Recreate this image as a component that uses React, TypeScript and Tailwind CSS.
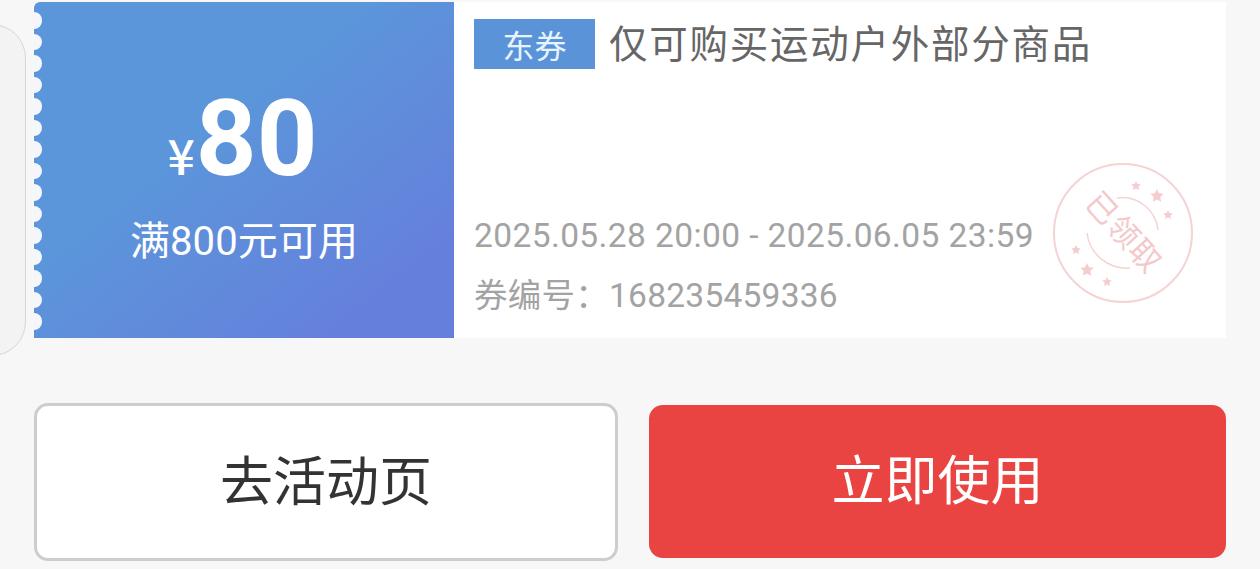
import React from 'react'

const cjk = { fontFamily: '"Noto Sans CJK SC", sans-serif' }
const mixed = { fontFamily: 'Roboto, "Noto Sans CJK SC", sans-serif' }
const bumps = Array.from({ length: 15 }, (_, i) => i)

function Star({ x, y, r }: { x: number; y: number; r: number }) {
  const pts = Array.from({ length: 10 }, (_, i) => {
    const a = (Math.PI / 5) * i - Math.PI / 2
    const d = i % 2 === 0 ? r : r * 0.5
    return `${x + d * Math.cos(a)},${y + d * Math.sin(a)}`
  }).join(' ')
  return <polygon points={pts} fill="#f5cdd0" />
}

function Stamp() {
  return (
    <svg width="144" height="144" viewBox="0 0 144 144" className="absolute left-[1017px] top-[160px]">
      <circle cx="72" cy="71" r="69" fill="none" stroke="#f5d3d3" strokeWidth="2" />
      <path d="M66 36 A36 36 0 0 1 107 68" fill="none" stroke="#f5d3d3" strokeWidth="1.5" />
      <path d="M36 71 A40 40 0 0 0 79 106" fill="none" stroke="#f5d3d3" strokeWidth="1.5" />
      <Star x={85} y={24} r={5} />
      <Star x={106} y={34} r={7} />
      <Star x={117} y={53} r={5} />
      <Star x={25} y={88} r={5} />
      <Star x={36} y={108} r={7} />
      <Star x={56} y={120} r={5} />
      <text
        x="71"
        y="72"
        textAnchor="middle"
        dominantBaseline="middle"
        fontSize="31"
        letterSpacing="1"
        fill="#f3c9cb"
        transform="rotate(48 71 72)"
        style={cjk}
      >
        已领取
      </text>
    </svg>
  )
}

export default function App() {
  return (
    <div className="relative w-[1260px] h-[569px] overflow-hidden bg-[#f7f7f7] pt-[2px] px-[34px]" style={cjk}>
      {/* previous card peeking in from the left */}
      <div className="absolute -left-[60px] top-[24px] w-[86px] h-[332px] rounded-r-[34px] border border-[#d6d6d6] bg-[#f3f3f3]" />

      <div className="relative flex h-[336px] w-[1192px]">
        <div className="relative w-[420px] flex flex-col items-center bg-gradient-to-br from-[#5b95da] from-40% to-[#6580dc] to-85% text-white overflow-hidden rounded-tl-[6px]">
          <div className="absolute left-[-8px] top-[10px] flex flex-col gap-[5px]">
            {bumps.map((i) => (
              <span key={i} className="block w-[16px] h-[16.5px] rounded-full bg-[#f4f6fb]" />
            ))}
          </div>
          <div className="mt-[83px] flex items-baseline h-[108px] -ml-[3px]">
            <span className="text-[48px] leading-none font-medium mr-[1px]">¥</span>
            <span className="text-[106px] leading-[108px] font-bold" style={mixed}>
              80
            </span>
          </div>
          <div className="mt-[24px] text-[40px] leading-[50px] tracking-[0.1px]" style={mixed}>
            满800元可用
          </div>
        </div>

        <div className="flex-1 bg-white pl-[20px] pt-[17px] flex flex-col">
          <div className="flex items-center h-[50px]">
            <span className="w-[121px] h-[50px] flex items-center justify-center bg-[#5a93d8] text-[#e8f4fd] text-[32px] leading-none">
              东券
            </span>
            <span className="ml-[14px] text-[#666666] text-[38.5px] leading-none -mt-[5px] tracking-[1.75px]">
              仅可购买运动户外部分商品
            </span>
          </div>
          <div className="mt-[145px] text-[#a3a3a3] text-[33.5px] leading-[44px] tracking-[0.4px]" style={mixed}>
            2025.05.28 20:00 - 2025.06.05 23:59
          </div>
          <div className="mt-[16px] text-[#a3a3a3] text-[33.5px] leading-[44px] tracking-[0.25px]" style={mixed}>
            券编号：168235459336
          </div>
        </div>
        <Stamp />
      </div>

      <div className="mt-[65px] flex justify-between">
        <button className="w-[584px] h-[158px] rounded-[14px] border-[3px] border-[#cdcdcd] bg-white text-[#333333] text-[53px] leading-none pb-[8px]">
          去活动页
        </button>
        <button className="w-[577px] h-[153px] mt-[2px] rounded-[14px] bg-[#e94442] text-white text-[53px] leading-none pb-[8px]">
          立即使用
        </button>
      </div>
    </div>
  )
}
